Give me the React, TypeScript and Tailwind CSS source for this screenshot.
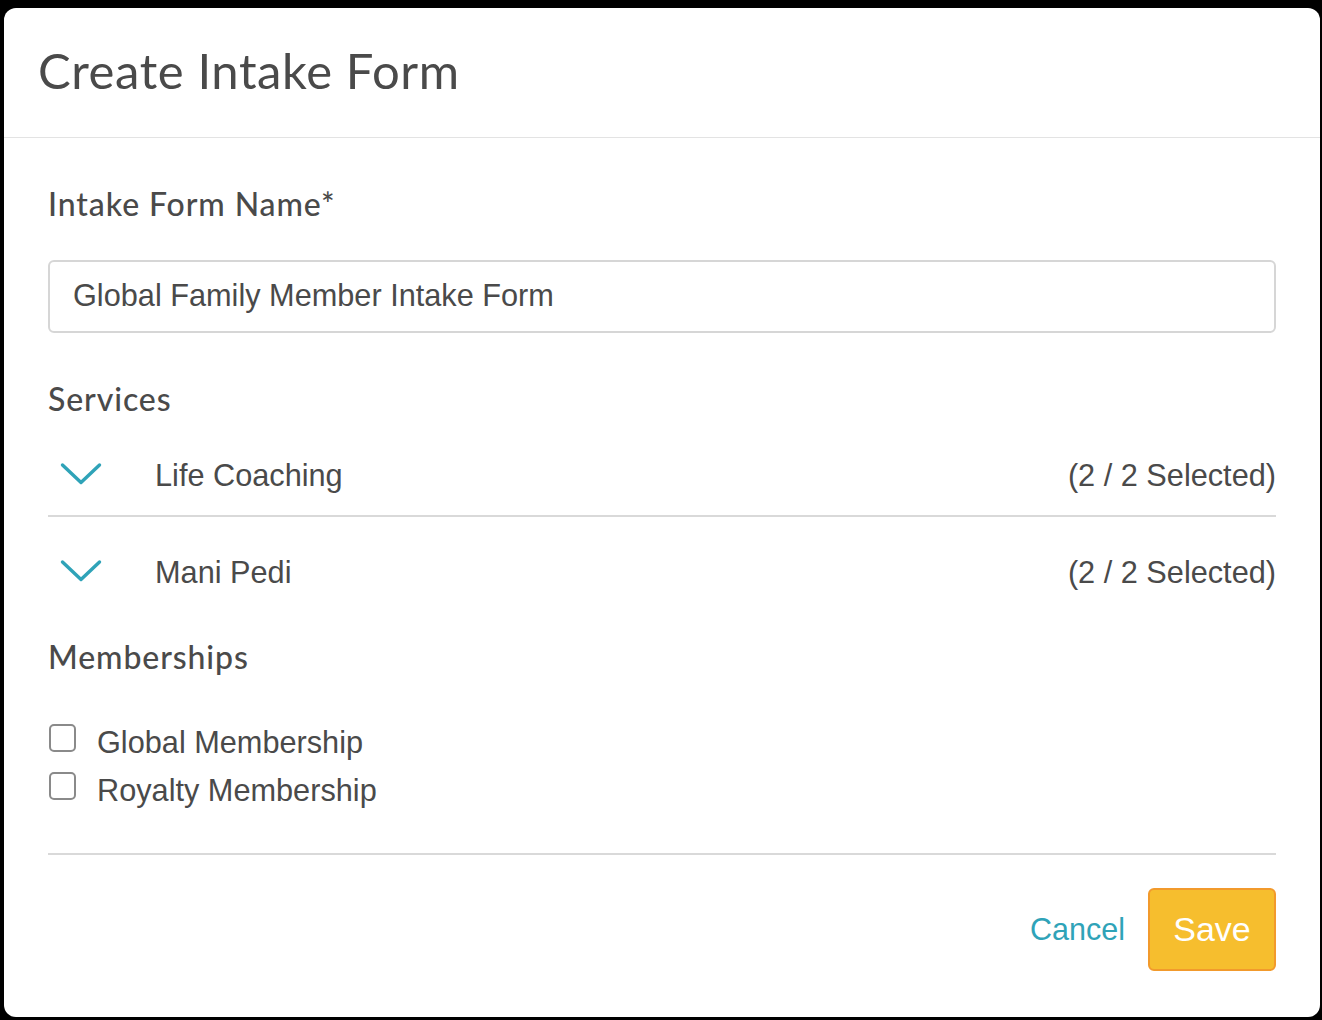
import React from "react";

const sans = { fontFamily: '"Liberation Sans", Arial, sans-serif' };
const geo = { fontFamily: 'Lato, "Noto Sans", sans-serif' };

function Chevron() {
  return (
    <svg width="42" height="24" viewBox="0 0 42 24" fill="none">
      <polyline points="2.5,3 21,20.5 39.5,3" stroke="#2fa3b8" strokeWidth="3.4" strokeLinecap="round" strokeLinejoin="round" />
    </svg>
  );
}

function ServiceRow({ name, bordered, h }: { name: string; bordered?: boolean; h: string }) {
  return (
    <div className={`flex items-center ${h} ${bordered ? "border-b-2 border-[#d9d9d9]" : ""}`}>
      <div className="w-[107px] pl-[12px] flex items-center">
        <Chevron />
      </div>
      <div className="flex-1 pt-[4px] text-[30.7px] text-[#4a4a4a]" style={sans}>{name}</div>
      <div className="pt-[4px] text-[30.7px] text-[#4a4a4a]" style={sans}>(2 / 2 Selected)</div>
    </div>
  );
}

function Check({ label }: { label: string }) {
  return (
    <div className="flex items-center h-[48px]">
      <div className="w-[27px] h-[28px] mb-[7px] rounded-[5px] border-2 border-[#8a8a8a] bg-white" />
      <div className="ml-[21px] pt-[4px] text-[30.7px] text-[#4a4a4a]" style={sans}>{label}</div>
    </div>
  );
}

export default function App() {
  return (
    <div className="w-[1322px] h-[1020px] bg-black pt-[8px] pl-[4px]">
      <div className="w-[1316px] h-[1009px] bg-white rounded-[12px] flex flex-col">
        <div className="h-[129px] flex items-center pl-[34px] border-b border-[#e3e3e3] box-content">
          <h1 className="text-[49px] leading-[56px] -mt-[5px] text-[#4a4a4a] font-normal tracking-[0.6px]" style={geo}>Create Intake Form</h1>
        </div>
        <div className="px-[44px] flex flex-col">
          <div className="mt-[48px] h-[36px] leading-[36px] text-[32px] tracking-[0.9px] text-[#4a4a4a] font-medium" style={geo}>Intake Form Name*</div>
          <div className="mt-[38px] h-[73px] border-2 border-[#d6d6d6] rounded-[6px] flex items-center pl-[23px] text-[30.7px] text-[#4a4a4a]" style={sans}>
            Global Family Member Intake Form
          </div>
          <div className="mt-[48px] h-[36px] leading-[36px] text-[32px] tracking-[0.9px] text-[#4a4a4a] font-medium" style={geo}>Services</div>
          <div className="mt-[16px]">
            <ServiceRow name="Life Coaching" bordered h="h-[84px]" />
            <ServiceRow name="Mani Pedi" h="h-[108px]" />
          </div>
          <div className="mt-[14px] h-[36px] leading-[36px] text-[32px] tracking-[0.9px] text-[#4a4a4a] font-medium" style={geo}>Memberships</div>
          <div className="mt-[42px] pl-[1px]">
            <Check label="Global Membership" />
            <Check label="Royalty Membership" />
          </div>
          <div className="mt-[40px] border-t-2 border-[#d9d9d9]" />
          <div className="mt-[33px] flex justify-end items-center">
            <div className="text-[30.5px] text-[#2fa3b8]" style={sans}>Cancel</div>
            <div className="ml-[23px] w-[128px] h-[83px] rounded-[6px] bg-[#f6be2e] border-2 border-[#f29a2c] flex items-center justify-center text-white text-[34px]" style={sans}>
              Save
            </div>
          </div>
        </div>
      </div>
    </div>
  );
}
